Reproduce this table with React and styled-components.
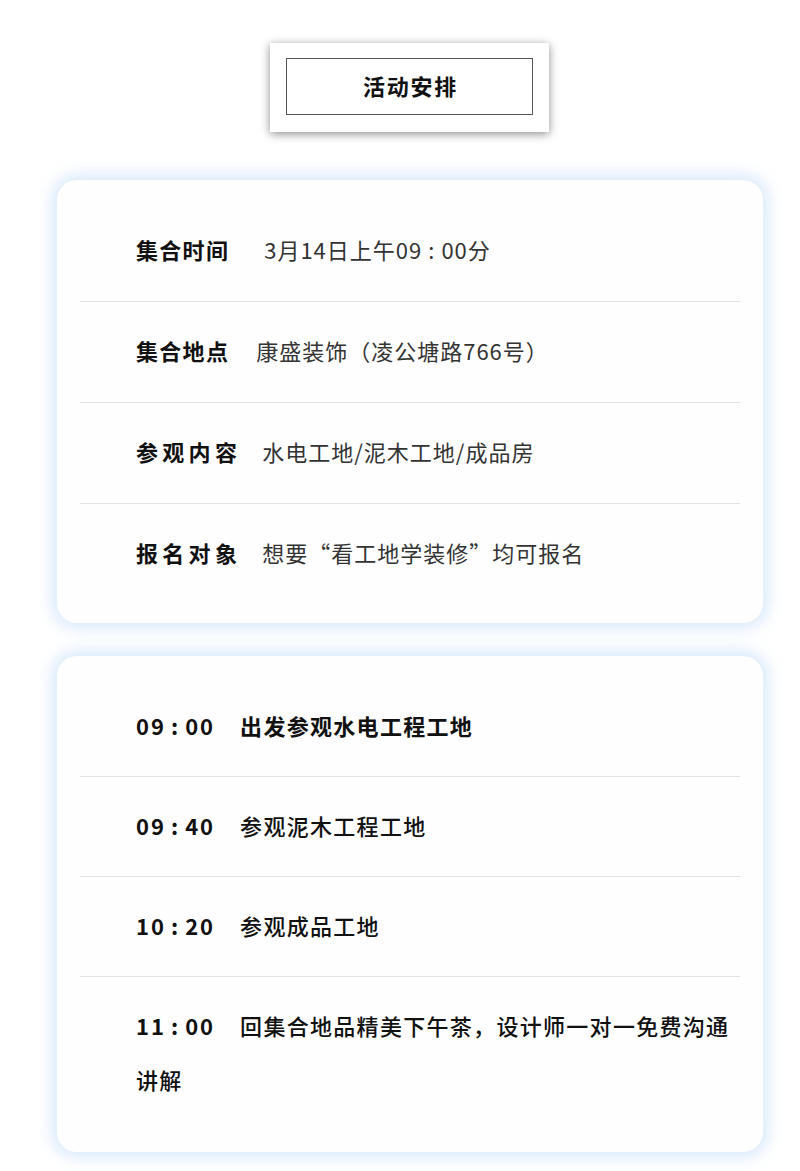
import React from "react";
import styled, { createGlobalStyle } from "styled-components";

const Global = createGlobalStyle`
  html, body { margin: 0; padding: 0; background: #ffffff; }
  body { font-family: "Noto Sans CJK SC", "Noto Sans", sans-serif; color: #111; }
`;

const Page = styled.div`
  width: 800px;
  padding: 43px 0 19px;
  box-sizing: border-box;
  display: flex;
  flex-direction: column;
  align-items: flex-start;
`;

const TitleWrap = styled.div`
  margin-left: 270px;
  width: 279px;
  height: 89px;
  box-sizing: border-box;
  padding: 15px 16px 17px;
  background: #fff;
  box-shadow: 0 2px 9px rgba(0, 0, 0, 0.45);
`;

const TitleInner = styled.div`
  height: 100%;
  border: 1px solid #555;
  box-sizing: border-box;
  display: flex;
  align-items: center;
  justify-content: center;
  font-size: 22px;
  font-weight: 700;
  letter-spacing: 1.7px;
  padding: 0 0 3px 2px;
  color: #111;
`;

const Card = styled.div`
  margin: ${(p) => p.$top}px 0 0 57px;
  width: 706px;
  box-sizing: border-box;
  padding: 21px 23px ${(p) => p.$bottom}px;
  background: #fefefe;
  border-radius: 20px;
  box-shadow: 0 0 16px 5px rgba(200, 222, 248, 0.7);
`;

const Row = styled.div`
  padding: 21px 0 ${(p) => (p.$inline ? 24 : 25)}px 56px;
  line-height: 54px;
  font-size: 22px;
  border-top: ${(p) => (p.$first ? "none" : "1px solid #e2e2e2")};
  display: ${(p) => (p.$inline ? "block" : "flex")};
  align-items: center;
`;

const Label = styled.span`
  font-weight: 700;
  color: #111;
  letter-spacing: ${(p) => p.$ls}px;
  margin-right: ${(p) => p.$gap}px;
  white-space: nowrap;
`;

const Value = styled.span`
  color: #333;
  letter-spacing: 1px;
  white-space: nowrap;
`;

const Colon = styled.span`
  margin: 0 ${(p) => p.$m ?? 5}px;
`;

const Time = styled.span`
  display: inline-block;
  font-weight: 700;
  color: #111;
  letter-spacing: 2px;
  margin-right: 25px;
`;

const Desc = styled.span`
  color: #111;
  font-weight: ${(p) => (p.$bold ? 700 : 500)};
  letter-spacing: 1.3px;
`;

const info = [
  { label: "集合时间", ls: 1.3, gap: 35, value: <>3月14日上午09<Colon $m={6}>:</Colon>00分</> },
  { label: "集合地点", ls: 1.3, gap: 27, value: "康盛装饰（凌公塘路766号）" },
  { label: "参观内容", ls: 4.3, gap: 21, value: "水电工地/泥木工地/成品房" },
  { label: "报名对象", ls: 4.3, gap: 21, value: "想要“看工地学装修”均可报名" },
];

const schedule = [
  { h: "09", m: "00", text: "出发参观水电工程工地", bold: true },
  { h: "09", m: "40", text: "参观泥木工程工地" },
  { h: "10", m: "20", text: "参观成品工地" },
  { h: "11", m: "00", text: "回集合地品精美下午茶，设计师一对一免费沟通讲解" },
];

export default function App() {
  return (
    <>
      <Global />
      <Page>
        <TitleWrap>
          <TitleInner>活动安排</TitleInner>
        </TitleWrap>
        <Card $top={48} $bottom={19}>
          {info.map((r, i) => (
            <Row key={r.label} $first={i === 0}>
              <Label $ls={r.ls} $gap={r.gap}>{r.label}</Label>
              <Value>{r.value}</Value>
            </Row>
          ))}
        </Card>
        <Card $top={33} $bottom={22}>
          {schedule.map((r, i) => (
            <Row key={i} $first={i === 0} $inline>
              <Time>
                {r.h}
                <Colon>:</Colon>
                {r.m}
              </Time>
              <Desc $bold={r.bold}>{r.text}</Desc>
            </Row>
          ))}
        </Card>
      </Page>
    </>
  );
}
